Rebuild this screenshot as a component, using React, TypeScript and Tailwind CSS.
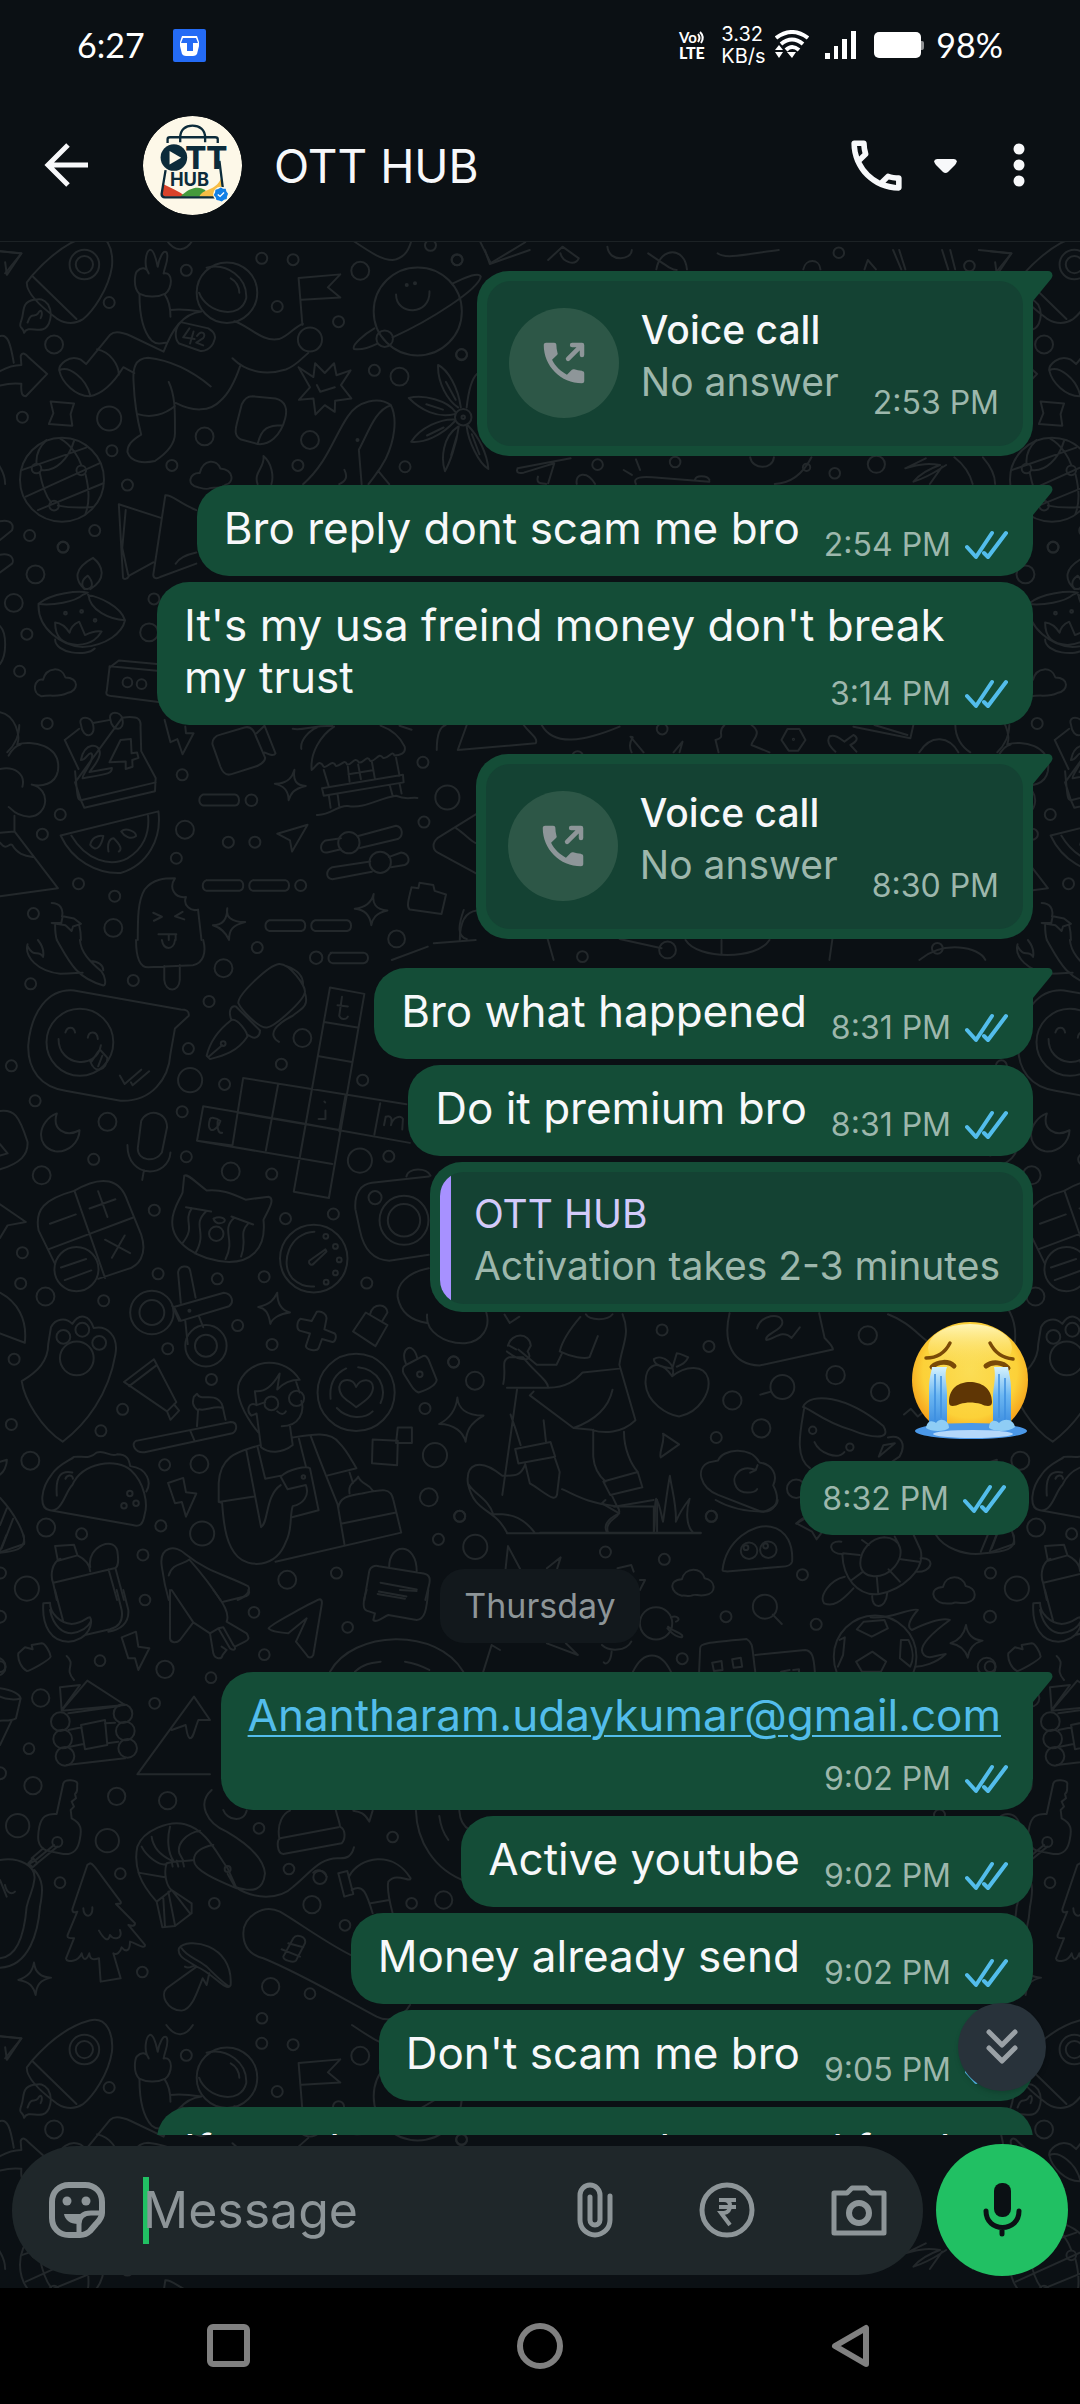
import { MdOutlineCall } from "react-icons/md"

type Dot = [number, number, number]

interface DoodlePanel {
    transform: string
    ratio: number
    dots: Dot[]
    path: string
}

interface Message {
    id: number
    kind: "text" | "call" | "quote" | "emoji" | "day" | "link"
    text: string
    time?: string
    tail?: boolean
    wide?: boolean
}

// chat messages
const messages: Message[] = [
    { id: 1, kind: "call", text: "No answer", time: "2:53 PM", tail: true },
    { id: 2, kind: "text", text: "Bro reply dont scam me bro", time: "2:54 PM", tail: true },
    { id: 3, kind: "text", text: "It's my usa freind money don't break my trust", time: "3:14 PM", wide: true },
    { id: 4, kind: "call", text: "No answer", time: "8:30 PM", tail: true },
    { id: 5, kind: "text", text: "Bro what happened", time: "8:31 PM", tail: true },
    { id: 6, kind: "text", text: "Do it premium bro", time: "8:31 PM" },
    { id: 7, kind: "quote", text: "Activation takes 2-3 minutes" },
    { id: 8, kind: "emoji", text: "Loudly crying face", time: "8:32 PM" },
    { id: 9, kind: "day", text: "Thursday" },
    { id: 10, kind: "link", text: "Anantharam.udaykumar@gmail.com", time: "9:02 PM", tail: true },
    { id: 11, kind: "text", text: "Active youtube", time: "9:02 PM" },
    { id: 12, kind: "text", text: "Money already send", time: "9:02 PM" },
    { id: 13, kind: "text", text: "Don't scam me bro", time: "9:05 PM" },
    { id: 14, kind: "text", text: "If you dont answer me bro send fund otherwise", time: "9:06 PM", wide: true },
]

// wallpaper doodles, one repeating tile split in panels
const panels: DoodlePanel[] = [
    {
        transform: "translate(0 240) scale(0.3444 0.4464)",
        ratio: 0.77,
        dots: [
            [317, 140, 16], [541, 68, 16], [760, 41, 16], [851, 44, 16], [805, 149, 16], [983, 183, 16],
            [1327, 44, 16], [1340, 257, 16], [1087, 292, 16], [1250, 12, 16], [65, 397, 16], [325, 472, 16],
            [370, 549, 16], [499, 505, 16], [865, 505, 16], [1176, 508, 16], [86, 662, 16], [275, 651, 16],
            [183, 688, 16], [78, 883, 16], [447, 804, 16], [57, 966, 16], [137, 1083, 16], [175, 1287, 16],
            [123, 1331, 16], [228, 1442, 16], [333, 1470, 16], [512, 1385, 16], [529, 1198, 16], [730, 1255, 17],
            [663, 1349, 16], [740, 1349, 16], [1228, 1170, 16], [1231, 1304, 16], [97, 1509, 16], [873, 1446, 16],
            [157, 234, 26], [1046, 69, 26], [1160, 306, 26], [594, 440, 26], [900, 448, 26], [103, 749, 26],
            [40, 813, 26], [537, 1321, 26], [433, 879, 26], [329, 1541, 26], [317, 400, 35], [1299, 1249, 35],
            [245, 55, 43], [245, 55, 25], [180, 537, 122], [106, 512, 14], [236, 516, 14], [157, 595, 14],
            [1213, 160, 128], [1117, 221, 24], [1345, 397, 24], [1345, 397, 5], [370, 991, 14], [411, 995, 14],
            [1013, 1350, 31], [1104, 1394, 31], [900, 223, 35], [659, 118, 88], [190, 836, 4], [237, 832, 4], [276, 852, 4],
            [1181, 101, 3], [1205, 97, 3], [1038, 448, 3],
        ],
        path: "M93 80C150 30 210 0 260 -10C310 -20 330 20 325 60C315 110 270 160 240 178C215 190 190 188 165 176C120 150 75 120 78 95ZM93 80L222 177" +
            "M98 134C60 140 72 160 62 180C52 200 68 194 70 208C80 192 105 205 125 200C145 195 155 165 140 145C125 130 115 132 98 134M80 185C90 160 100 175 110 165C120 150 125 165 118 175" +
            "M0 25L62 30L20 78L15 50M0 215C22 210 30 230 40 275M0 294C20 285 40 280 62 280L60 260C65 250 75 255 82 262L137 300L75 350C65 350 60 345 62 322C40 320 20 322 0 326" +
            "M147 362L215 366L205 390L210 416L142 412L155 388ZM405 122C405 160 410 200 440 225C455 235 470 232 482 230M404 120C385 105 392 75 398 70C410 60 425 60 432 75C415 55 425 25 435 22C448 20 455 50 458 60C462 40 475 20 484 28C492 40 478 60 475 75C505 70 500 110 480 120C455 130 425 128 404 120M478 122C495 140 495 160 495 172M495 157C520 153 550 156 585 160C530 165 500 200 475 250L380 215C350 205 330 205 320 212L250 278L235 268C200 255 170 280 172 292C180 320 220 350 260 350C300 345 330 320 358 285L390 298" +
            "M282 245C320 250 345 280 345 302M172 292C200 280 250 310 262 348M675 265C720 300 780 302 830 290C860 282 880 262 895 253M680 182C720 190 760 230 810 222C840 215 860 190 880 188M612 328C560 295 500 270 430 264C390 265 385 290 388 320C390 360 398 400 410 436C380 450 370 460 370 475C380 500 420 500 450 495C480 480 510 460 508 430C508 390 510 350 490 318M400 390C440 400 480 390 508 372M510 365C560 385 610 385 640 360C670 340 685 310 697 283" +
            "M578 118C600 165 700 180 715 130C718 85 660 50 600 62M670 86C685 92 695 105 695 118M525 184L605 198C620 205 628 215 622 225C615 245 590 250 580 248L520 232C505 220 508 195 525 184M550 198L532 218L565 222M562 205L552 232M572 215C585 200 600 210 590 220L570 230L590 236" +
            "M878 190L867 85L988 77L952 106L988 129L876 134M1150 122C1150 170 1250 170 1247 115M1315 97C1350 85 1390 70 1396 82C1390 110 1250 180 1140 218M1087 198C1060 210 1020 235 1028 244C1050 248 1080 238 1096 232" +
            "M867 285L910 307L915 276L943 298L970 276L977 303L1018 292L990 325L1020 355L973 360L972 385L943 370L916 391L910 355L868 358L900 330ZM920 325L930 340L972 330M732 350L800 355C830 360 835 380 828 400C815 440 780 460 748 457L700 447C680 440 683 425 688 410L702 368C710 355 720 350 732 350M748 457C760 420 780 415 820 415" +
            "M880 547C950 500 970 440 1010 395C1040 360 1100 350 1135 370C1155 400 1145 450 1120 490C1100 520 1085 530 1070 547M1135 370C1090 380 1070 430 1042 470L1050 547M1098 517L1130 547M1000 515C1010 530 1005 540 985 547" +
            "M1330 375C1300 360 1270 320 1272 280C1300 290 1330 330 1338 375M1320 390C1270 400 1220 380 1187 354C1230 345 1300 360 1322 385M1322 405C1280 440 1230 455 1194 452C1220 420 1280 400 1320 402M1332 418C1325 460 1305 500 1292 518C1280 490 1285 440 1330 418M1358 415C1390 440 1415 480 1418 513C1390 500 1360 450 1355 418M1355 375C1360 340 1370 310 1385 300M1295 318L1323 358M1238 368L1286 380M1240 438L1288 420M1310 482L1326 440M1370 435L1392 480" +
            "M65 515L250 465M75 575L290 500M110 605L300 545M115 520C125 560 140 580 148 588M168 595C200 600 240 600 270 598M135 448C105 470 105 490 106 500M175 445C210 460 230 490 236 504M248 524C260 560 260 590 248 614M120 515C160 520 200 490 215 450" +
            "M575 554C540 550 550 520 580 522C590 490 630 490 640 512C680 515 680 545 655 548C640 560 620 552 610 556C600 560 585 556 575 554M748 547C735 520 770 510 765 484C790 500 795 530 788 547" +
            "M345 592L465 622M345 592L357 755C358 762 370 760 375 752L445 722M365 605L355 690L372 750M480 572L445 750C445 758 455 760 465 755L570 725M480 572C500 570 520 590 570 605M510 725C520 712 540 705 570 700" +
            "M112 815C108 870 180 910 240 912C310 908 355 880 363 852C350 820 290 800 255 795M112 815C150 820 220 810 240 795L255 790C230 785 150 790 112 815M257 795C260 830 320 850 363 852M245 782C215 760 215 735 270 712C300 730 310 760 262 782M255 752C230 765 238 782 254 782C272 780 270 765 255 752M160 857C160 890 180 905 225 907C270 905 285 890 295 877C280 875 260 880 247 885L230 855C215 860 205 870 202 880C190 865 175 858 160 857M160 895C160 925 250 935 275 915" +
            "M120 1022C90 1015 100 980 125 985C135 955 180 955 190 980C230 980 230 1010 195 1015C170 1025 150 1018 120 1022M318 958L310 1010C305 1020 315 1022 330 1022L460 1035M318 958L345 942L456 950M318 955L456 965" +
            "M188 1120L230 1095M270 1082L320 1075M355 1070C405 1065 410 1075 408 1090L410 1145L452 1205L450 1235L245 1272L235 1255L218 1215ZM188 1120L228 1185M218 1190C225 1250 225 1255 235 1255L452 1215M235 1165C245 1125 290 1125 290 1150C290 1165 270 1180 260 1192L325 1183C325 1195 320 1195 240 1206C235 1200 280 1160 265 1150C255 1148 250 1165 235 1165M350 1120L318 1170L365 1168L365 1185L385 1180L384 1165L402 1160L398 1148L382 1150L380 1118Z" +
            "M235 1085C225 1065 265 1065 270 1085C280 1115 240 1120 235 1085M320 1072C315 1055 350 1055 355 1072C365 1100 325 1105 320 1072M478 1075L495 1125L515 1118L530 1152L562 1105L540 1105L538 1090M617 1130C615 1120 625 1110 640 1108L710 1092C730 1088 738 1100 742 1110L770 1160C770 1170 750 1178 740 1180L670 1197C655 1200 645 1190 640 1180ZM745 1105L768 1088L800 1150C795 1158 780 1152 768 1148M855 1187C850 1210 860 1222 888 1223C850 1230 845 1240 838 1255C838 1230 820 1222 798 1218C840 1218 850 1200 855 1187" +
            "M590 1242H682C698 1245 698 1265 682 1267H590C575 1262 575 1248 590 1242M600 1434H695C710 1437 710 1455 695 1458H600C585 1455 585 1438 600 1434M735 1434H828C843 1437 843 1455 828 1458H735C720 1455 720 1438 735 1434M782 1524H875C890 1527 890 1545 875 1548H782C767 1545 767 1528 782 1524M915 1524H1008C1023 1527 1023 1545 1008 1548H915C900 1545 900 1528 915 1524" +
            "M805 1330L893 1310L848 1370L842 1345ZM990 1340L945 1345C925 1355 930 1375 950 1372L990 1365M1040 1335L1150 1312C1170 1315 1172 1335 1155 1342L1045 1362M1075 1392L965 1405C945 1412 945 1430 965 1432L1080 1415M1130 1382L1165 1372C1190 1375 1192 1395 1175 1400L1135 1405" +
            "M905 1187C900 1150 930 1110 970 1090M905 1187C920 1180 925 1160 940 1180C950 1185 965 1160 975 1178C990 1180 1000 1160 1008 1175C1020 1178 1030 1155 1042 1170C1055 1175 1065 1150 1075 1167C1090 1170 1100 1145 1112 1160C1125 1165 1140 1140 1145 1155C1160 1155 1180 1150 1175 1135C1160 1110 1130 1095 1105 1088M940 1187L955 1225M1150 1160L1160 1200M935 1228L1170 1198L1172 1215L940 1245ZM955 1245L960 1272M980 1240L985 1268M1132 1222L1140 1245M1160 1217L1166 1240M920 1288C960 1290 980 1265 1010 1268C1060 1275 1100 1250 1150 1245C1180 1255 1190 1248 1212 1250M1010 1180L1015 1213M1040 1175L1048 1208M1080 1170L1088 1205M1012 1197L1082 1188M850 1095C880 1100 900 1088 965 1088M875 1140C870 1120 900 1098 920 1092M1195 1097L1160 1088" +
            "M176 1334L460 1280C470 1340 430 1400 350 1418C280 1420 210 1390 176 1334M207 1334C250 1390 320 1405 370 1385C415 1365 435 1330 430 1290M262 1355C265 1340 285 1332 300 1335C295 1355 280 1375 262 1355M315 1370C310 1350 320 1340 330 1340C350 1355 355 1365 345 1370M352 1325C365 1315 395 1325 395 1335C380 1345 360 1335 352 1325" +
            "M0 1058C45 1065 60 1110 50 1130C90 1120 180 1130 168 1190C160 1220 120 1225 92 1220C150 1230 140 1290 85 1292C40 1290 30 1270 25 1270M25 1155C35 1140 50 1132 60 1130M0 1185C40 1178 75 1195 65 1225M42 1290V1325L168 1452L0 1470M0 1328L42 1325M0 1350C20 1370 25 1350 35 1355C50 1375 70 1380 95 1382" +
            "M400 1568C400 1520 400 1480 420 1455C445 1430 480 1430 508 1430C490 1450 505 1475 540 1472C530 1490 555 1505 575 1500L585 1568M445 1507L470 1516L447 1525M530 1505L508 1515L535 1522M460 1555H512M490 1556V1568M510 1556V1568M660 1497C655 1515 670 1528 712 1528C675 1535 665 1545 665 1568M660 1497C660 1520 650 1535 618 1535C640 1540 655 1550 665 1568M1085 1465C1080 1485 1090 1500 1125 1502C1090 1508 1082 1520 1078 1535C1075 1515 1060 1500 1030 1498C1065 1495 1080 1480 1085 1465M1195 1450L1215 1452L1218 1440L1258 1445L1262 1458L1295 1466L1282 1510L1190 1500C1180 1495 1185 1480 1195 1450M1385 1285L1270 1340C1255 1350 1255 1365 1270 1372L1385 1420M1325 1318C1350 1330 1370 1350 1385 1352" +
            "M150 1485C175 1485 185 1500 180 1515M150 1530L178 1530L182 1515L215 1520L235 1532L212 1538L208 1548L190 1535ZM160 1535C160 1555 162 1560 165 1568M230 1535C235 1550 235 1560 235 1568M1335 1568C1335 1530 1350 1505 1385 1502M483 0C510 30 540 25 560 0M1022 0C1080 30 1110 45 1140 45C1180 40 1190 15 1195 0M1395 5L1425 52L1525 5M0 630C35 625 40 640 35 650L0 672M0 705C40 700 40 720 35 725L0 745M0 865C20 880 20 930 0 950",
    },
    {
        transform: "translate(0 940) scale(0.3444 0.4209)",
        ratio: 0.82,
        dots: [
            [89, 104, 16], [387, 96, 16], [747, 18, 16], [607, 146, 16], [918, 42, 18], [547, 258, 16], [33, 299, 16],
            [652, 343, 16], [817, 295, 16], [1053, 333, 16], [102, 382, 16], [529, 408, 16], [272, 521, 16], [541, 515, 16],
            [1129, 514, 16], [789, 556, 16], [448, 642, 16], [829, 662, 16], [968, 651, 16], [65, 743, 16], [60, 816, 16],
            [459, 793, 16], [631, 805, 16], [767, 800, 16], [1065, 815, 16], [301, 857, 16], [690, 916, 16], [41, 996, 16],
            [487, 971, 16], [790, 961, 16], [614, 1044, 16], [356, 1115, 16], [1234, 1113, 16], [1317, 1002, 16],
            [33, 1151, 16], [293, 1166, 16], [478, 1247, 16], [467, 1392, 16], [237, 1411, 16], [1335, 1369, 16],
            [415, 1461, 16], [977, 1504, 16], [1273, 1424, 16], [649, 67, 26], [878, 233, 26], [312, 432, 26],
            [121, 559, 26], [670, 550, 26], [132, 847, 26], [1379, 1047, 26], [88, 1237, 26], [134, 1396, 26],
            [579, 1245, 26], [1245, 1324, 26], [834, 1520, 26], [552, 333, 35], [1045, 524, 35], [587, 1410, 35],
            [1263, 1224, 35], [1380, 1442, 35], [78, 1541, 35], [232, 243, 97], [441, 885, 63], [441, 885, 36],
            [598, 964, 60], [598, 964, 32], [911, 757, 98], [1034, 1075, 112], [1173, 666, 71], [1173, 666, 47],
            [1089, 612, 19], [222, 782, 64], [223, 994, 49], [184, 943, 20], [239, 926, 20], [288, 957, 20],
            [628, 698, 21], [946, 704, 7], [974, 728, 7], [985, 760, 7], [974, 791, 7], [947, 813, 7], [1219, 1032, 8],
            [360, 1344, 8], [377, 1315, 8], [395, 1338, 8], [550, 881, 3], [648, 246, 7], [881, 1276, 5], [788, 1101, 20], [861, 1089, 22],
        ],
        path: "M80 10C70 40 110 75 175 80C210 80 225 78 240 78M80 15C100 45 110 20 125 40C130 20 115 5 110 0M165 0C200 50 220 90 300 108C310 108 305 85 295 75C260 50 235 30 232 0M262 50C285 50 300 60 300 72M395 0C395 50 410 65 430 65L560 60C590 55 600 30 590 0M470 0C475 25 505 25 508 0M477 62V95C480 125 520 125 522 95V60M960 30H1055C1073 33 1073 52 1055 55H965C950 52 950 35 965 30" +
            "M215 120C140 115 90 170 82 250C80 310 120 350 190 358L350 382C440 385 490 330 495 270L508 210L548 180C550 168 540 165 525 165ZM190 220C195 205 215 205 218 220M255 232C258 215 282 215 284 235M170 235C170 300 280 310 293 250M265 290L285 265M285 300L297 275M262 288C275 320 310 310 312 280L292 262M348 322L362 342L410 308M380 338L385 345L433 312" +
            "M600 275C610 240 640 210 672 190C690 185 720 220 718 230C690 265 650 275 610 283ZM672 190C662 170 670 155 685 158L755 215C755 230 740 235 730 230L718 225M692 150C690 130 780 60 810 57C840 55 890 110 885 125C880 145 800 205 775 208C750 210 700 165 692 150M832 62C860 70 880 85 880 105M885 125C900 160 870 165 850 180C800 200 775 225 810 242M605 278L645 250" +
            "M958 113L1058 128L955 613L853 598ZM941 195L1038 208M926 276L1022 290M706 328L1180 390M690 410L990 452L985 455M590 395L890 437L985 452L1190 482M572 477L965 532M590 395L572 477L675 488L706 328M807 345L772 500M1104 388L1087 462M1003 370L985 452M905 357L870 518M610 425C600 450 615 462 635 440L640 430C625 420 612 422 610 425M632 430C630 450 635 460 645 458M945 405V425H925M942 384L944 386M980 155L1010 158M993 135L985 180C990 190 1005 190 1010 182M1115 440L1120 420C1135 415 1140 425 1135 440M1135 440C1140 420 1165 415 1170 425L1168 450" +
            "M165 412C110 430 100 490 160 502C200 505 230 480 231 452C190 470 150 450 165 412M410 430C425 400 485 405 485 445L470 505C450 530 400 525 400 495ZM370 487C370 570 490 565 495 505M418 547L413 570M0 406C40 402 55 415 80 480C82 510 60 530 0 545M0 485L22 507L0 512M0 628L75 670L22 678L0 708M0 838C50 860 80 900 72 957L0 935" +
            "M215 596C300 555 350 570 370 620L410 700C430 750 400 775 370 782L285 805M160 770L112 690C100 640 130 615 215 596M217 598L305 803M140 735L385 660M145 674L220 652M260 638L335 616M285 597L312 658M305 712L378 744M362 702L325 755M177 778L250 758M188 808L265 785" +
            "M535 560C545 555 560 570 600 595C640 592 670 600 713 617L780 610C800 615 780 640 765 665C775 740 720 765 665 765C570 760 500 720 500 670C500 640 520 620 530 600ZM540 635L613 645M672 657L735 676M557 637C530 670 570 680 530 720M598 645C555 680 605 690 567 745M680 660C640 690 685 710 655 758M722 672C690 700 720 710 700 752M620 662C640 655 660 662 650 670C640 675 625 675 620 662" +
            "M913 693C840 695 810 770 850 805C870 820 890 825 912 823M945 735L898 762C895 770 905 775 912 768L948 740ZM1245 748L1130 762C1080 760 1055 730 1045 690L1032 640C1028 600 1050 580 1080 577L1245 562M1180 562C1185 540 1240 540 1250 560M525 862L517 790C520 772 548 772 552 785L568 850M505 872L650 838C675 840 680 862 665 870L525 905ZM500 868L520 905M538 905L545 960M578 895L590 920" +
            "M805 838C805 865 820 880 842 885C810 888 790 900 785 912C780 885 770 875 750 872C785 865 795 855 805 838M920 883C935 880 950 890 948 900L942 925L972 935C978 940 975 955 965 955L935 948L925 970C920 978 890 975 888 965L900 935L870 928C860 925 862 905 872 900L905 905ZM1062 885L1125 915L1090 965L1025 930ZM1075 888C1085 860 1125 865 1125 885L1110 905M1245 780C1180 790 1150 820 1155 850C1165 890 1200 905 1240 910M1240 890C1235 930 1290 960 1350 958C1400 955 1425 920 1412 885M1465 890L1480 910L1508 895" +
            "M148 920C160 900 190 895 210 912C230 885 260 890 272 922C310 915 345 940 335 985C315 1080 250 1150 182 1192C120 1160 70 1090 63 1048C110 1025 140 1000 140 960ZM447 996L360 1050L485 1120L512 1098ZM455 1010L375 1060M485 1120L495 1140L520 1118L505 1103M563 1085C560 1095 555 1105 575 1118L572 1155M563 1085L572 1078C580 1095 610 1080 630 1090C650 1100 645 1110 655 1140M395 1190L670 1145C690 1145 690 1165 675 1172L420 1217C390 1220 380 1195 395 1190M552 1165L565 1190M578 1115C600 1120 620 1105 648 1112" +
            "M750 1170C710 1130 680 1080 695 1050C730 990 830 990 870 1045C840 1045 820 1055 805 1068L812 1030C790 1060 770 1075 740 1072L745 1105L770 1098M745 1105C720 1095 715 1120 730 1130L745 1125L758 1205C780 1220 820 1220 850 1200L842 1155M818 1155C870 1155 885 1120 875 1095M805 1120C815 1128 825 1128 830 1120M860 1050L870 1075M755 1200C700 1215 640 1220 635 1290V1335L645 1338C650 1400 660 1440 690 1465C720 1490 800 1495 830 1430C850 1400 840 1370 850 1345C880 1340 900 1320 888 1295L835 1305L815 1275C840 1255 890 1250 900 1255L925 1355L845 1372M635 1335L738 1322M715 1212L758 1395C780 1385 770 1320 815 1295M748 1205L770 1280L820 1272M868 1185L888 1250M850 1182C900 1175 960 1165 985 1195C1005 1210 1020 1235 1035 1255L952 1272M902 1178C930 1240 960 1300 980 1340L1000 1435M800 1477L1165 1408L1142 1330C1135 1300 1110 1305 1050 1315C1010 1320 985 1325 982 1350M990 1387L1150 1360M1015 1315C1010 1290 1030 1290 1040 1275C1050 1295 1070 1290 1082 1308M1015 1265L1025 1290" +
            "M1034 1110C1005 1090 985 1085 985 1062C990 1040 1025 1040 1034 1062C1045 1040 1085 1040 1083 1065C1080 1085 1060 1095 1034 1110M960 1090C955 1050 975 1030 1005 1018M1040 1015C1100 1020 1125 1065 1105 1100M978 1112C1010 1140 1060 1138 1082 1120M1172 1030C1165 1015 1175 1010 1190 1005L1225 990C1235 985 1240 990 1245 998L1268 1045C1265 1060 1235 1070 1215 1075C1200 1070 1195 1060 1172 1030M1178 1005C1160 970 1200 950 1212 995M1328 1087C1330 1110 1350 1130 1404 1130C1360 1150 1355 1170 1352 1192C1345 1170 1320 1150 1275 1150C1310 1135 1325 1110 1328 1087M1082 1187L1155 1190L1153 1248L1080 1243ZM1155 1158H1196V1195H1150Z" +
            "M145 1355C180 1360 190 1310 210 1295C240 1240 340 1230 380 1260C420 1290 430 1340 420 1365C415 1390 405 1395 385 1390L145 1355C110 1350 120 1300 150 1270C170 1245 200 1238 215 1228C235 1225 260 1235 280 1218C305 1210 320 1230 340 1222C370 1222 375 1235 378 1250C430 1255 440 1290 425 1310M165 1320C160 1270 180 1260 210 1265M190 1280C195 1270 210 1270 212 1280M488 1290L532 1278L540 1312L570 1315L540 1370L528 1335L508 1338ZM0 1325C40 1360 75 1410 70 1435L0 1455M20 1350L0 1390M38 1375L5 1445M0 1240L20 1235C20 1250 10 1265 0 1270" +
            "M160 1440L215 1437L225 1462L168 1475ZM175 1470C150 1480 145 1510 155 1530L165 1568M225 1462C245 1470 260 1480 262 1500M155 1527L335 1492L360 1568M262 1490C250 1440 340 1410 342 1460C345 1480 340 1490 335 1492M315 1495L340 1568M470 1490C460 1440 510 1435 540 1460C600 1500 660 1510 720 1535C730 1545 715 1560 690 1568M470 1490C475 1520 480 1540 490 1568M490 1510C500 1480 530 1485 550 1472M550 1472C580 1500 610 1530 640 1568M1058 1568L1072 1500C1075 1488 1090 1485 1100 1488L1230 1505C1250 1508 1250 1520 1245 1535L1235 1568M1130 1490C1130 1430 1210 1430 1210 1500M1105 1527L1210 1543M1100 1548L1180 1560M1468 1494L1475 1440L1510 1494",
    },
    {
        transform: "translate(0 1590) scale(0.3333)",
        ratio: 1,
        dots: [
            [435, 30, 16], [762, 67, 16], [1043, 112, 16], [793, 194, 16], [300, 212, 16], [633, 263, 16], [464, 340, 16],
            [87, 476, 16], [777, 715, 16], [867, 837, 16], [1178, 741, 16], [361, 851, 16], [180, 878, 16], [643, 940, 16],
            [1235, 940, 16], [1035, 1006, 16], [427, 1146, 16], [930, 1211, 16], [786, 1285, 16], [495, 238, 26],
            [122, 324, 26], [99, 587, 26], [350, 619, 26], [503, 632, 26], [936, 944, 26], [1331, 930, 26], [812, 1190, 26],
            [53, 707, 35], [322, 752, 35], [181, 395, 28], [188, 447, 28], [195, 499, 28], [369, 371, 28], [376, 423, 28],
            [383, 475, 28], [172, 756, 15], [683, 837, 9], [960, 862, 20], [0, 80, 18], [0, 550, 18], [0, 230, 16],
        ],
        path: "M130 40L150 38C150 70 180 100 215 102C250 100 260 80 270 82C280 95 270 150 205 155C155 155 125 110 130 40M150 60C160 110 190 130 215 130C245 125 265 110 272 95M165 0L190 95M255 135L330 118C360 110 370 90 365 60L350 0M370 0L385 60C388 100 360 120 325 125" +
            "M510 0V145C512 160 530 160 540 150L580 97L515 0M580 97L630 130L640 190C645 208 665 210 668 195L680 180L665 170M640 0C670 40 690 70 680 95L740 130C750 145 745 150 735 155L705 170M655 115L690 175C705 185 710 175 700 165L670 112ZM670 35L740 18C750 12 748 5 745 0M630 130L655 115M806 115C808 105 950 30 960 28C968 30 966 40 965 45L940 195C935 205 925 205 920 195L888 155L920 85L865 130C840 128 812 125 806 115M1100 0C1090 30 1085 55 1100 62L1125 70L1120 90C1130 100 1150 80 1165 75L1250 90C1275 88 1280 60 1285 0M1133 12L1215 26M1200 0L1250 3" +
            "M55 190L75 172L98 178L95 165L125 160C135 160 150 185 152 200C150 210 85 245 80 243C65 235 52 210 55 190M365 142L408 125L415 170L448 175L415 240L405 205L385 205ZM200 198C230 225 190 235 222 270M180 292L240 285L185 360ZM185 362L262 272L375 345ZM243 405L315 390L322 465L255 478ZM205 420L245 412M210 470L250 462M315 400L345 398M322 460L355 455M205 370L360 348M200 525L375 505" +
            "M630 553H412L582 320L630 390L595 390C580 430 580 445 570 445C560 440 560 415 557 405L515 420M190 580C195 565 230 570 232 580C230 600 235 605 225 612L228 625L215 635L222 650L212 660L215 685C245 700 245 720 240 745C235 780 220 795 190 792L140 782C110 770 112 740 118 710C125 680 140 670 170 672ZM162 765L105 812L90 820M172 770L105 825M85 820L100 805L112 820L98 832ZM130 775L95 805" +
            "M270 820C280 820 290 840 362 935C365 945 355 940 348 942L405 1000C405 1010 395 1008 385 1005L435 1065C435 1080 410 1060 390 1055C390 1080 380 1090 365 1072C360 1090 350 1095 340 1090L362 1165L302 1175L297 1105C280 1110 270 1110 268 1090C260 1110 250 1115 245 1090C235 1115 200 1120 198 1105L222 1045C210 1045 200 1045 203 1035L232 965C220 970 215 965 218 955L262 825ZM250 955C250 985 280 985 277 952M297 1022C310 1045 325 1060 330 1035C340 1050 370 1050 360 1020" +
            "M412 770C430 720 510 690 555 703C620 720 650 790 683 835L710 895C650 870 580 840 582 810C560 815 530 810 500 820C490 850 500 890 515 900L575 940V970L525 1008L487 1012L470 935C420 880 400 830 412 770M425 770C440 800 480 830 500 822M455 740C460 780 490 800 515 812M510 710C500 750 505 790 520 812M600 722C560 730 530 760 538 790L550 812M640 765C610 770 580 785 582 812M415 848L495 862M515 900L570 970M505 905L525 1005M490 925L495 1010M470 935L515 900M515 815L518 830M530 812L535 830M548 812L552 830" +
            "M635 600C590 640 620 700 680 725C740 760 790 800 795 850C790 900 760 910 705 890M683 852L705 890C760 930 840 930 880 890C930 850 960 800 1020 805C1040 805 1055 800 1062 772M940 848C950 835 970 840 980 860M838 745C830 700 850 670 870 662M840 745L1015 712M1008 662C1015 690 1020 700 1020 710C1040 720 1035 750 1025 760L850 792C830 790 830 750 840 745M670 660C680 690 730 700 740 662M1060 662C1080 665 1095 670 1108 695L1118 662" +
            "M1015 850L1042 843L1060 912L1033 920ZM1048 858C1080 800 1180 780 1232 865C1230 880 1190 845 1165 875C1160 900 1170 940 1178 970M1055 900C1090 880 1100 910 1118 970M1112 940L1168 930M1058 1098C980 1060 900 1000 840 965C790 940 730 980 730 1030C730 1070 750 1095 790 1105C900 1150 1000 1210 1130 1280C1170 1300 1210 1280 1230 1245M850 1100L880 1045C890 1030 920 1040 915 1060L888 1112C880 1120 850 1110 850 1100M845 1078L900 1100M865 1060L910 1072M1248 662C1250 750 1300 840 1400 875M1318 678C1322 710 1330 730 1345 750M1378 662C1380 690 1390 710 1410 720" +
            "M537 1075C560 1040 700 1060 692 1185C680 1210 640 1150 590 1130C560 1110 530 1100 537 1075M555 1130C570 1140 580 1120 590 1130L500 1195C480 1215 500 1260 545 1262C575 1260 590 1210 608 1165L620 1185L628 1150M545 1075C560 1100 590 1105 620 1130C640 1150 670 1180 688 1190M102 1118C105 1145 120 1162 153 1163C120 1170 110 1185 107 1215C100 1190 90 1175 55 1170C85 1160 97 1145 102 1118M0 810C60 800 110 830 103 870C100 900 90 910 80 950C75 1010 60 1100 0 1105M103 840C130 870 130 900 120 950C115 1020 90 1130 0 1133M0 870L20 920M15 885C20 910 35 915 45 905M0 295C40 300 60 315 62 325L48 385C30 395 10 390 0 392M0 320C20 330 50 330 60 325M35 392L0 465M990 245C1060 120 1310 110 1390 245M1065 245C1090 220 1120 218 1142 215M1215 215C1250 220 1270 230 1288 240M1450 245L1475 165L1500 180",
    },
    {
        transform: "translate(360 940) scale(0.4591 0.3827)",
        ratio: 1.2,
        dots: [
            [658, 1019, 12], [760, 1062, 12], [204, 1103, 12], [776, 1300, 12], [765, 1506, 12], [217, 1506, 12],
            [1106, 1033, 20], [1036, 1137, 20], [811, 1203, 20], [1133, 1181, 20], [874, 1276, 20], [950, 1434, 20],
            [920, 1168, 26], [986, 1281, 8], [1067, 1325, 8],
        ],
        path: "M492 978C500 995 540 995 550 978M480 985C455 1020 440 1050 435 1075C460 1090 490 1095 500 1090L518 1035M572 978C590 1030 570 1060 565 1110L600 1255C570 1290 530 1290 505 1280L465 1275L370 1190L378 1180M312 1160C320 1120 305 1100 325 1090L355 1090C380 1130 410 1150 410 1170L320 1170M322 1060C330 1025 370 1025 372 1060L365 1075C380 1100 350 1105 320 1075M345 1070L385 1110L428 1110L440 1080M410 1170C450 1170 470 1150 485 1130L565 1120M325 1060L340 1070M342 1175L310 1450M328 1240C340 1280 345 1300 350 1320M400 1255L405 1310M338 1330L415 1312L425 1350L345 1368ZM360 1370L370 1420C400 1440 430 1480 430 1440L435 1390L425 1355M465 1275C500 1260 540 1230 550 1175M508 1280V1350C510 1380 520 1400 535 1415M575 1285C575 1330 590 1370 605 1390M530 1415L605 1390L615 1430L545 1450ZM548 1450L560 1480H640V1548M560 1480C580 1510 530 1510 540 1548M360 1370C350 1400 340 1400 310 1400C260 1350 230 1370 235 1420C250 1450 280 1460 290 1500C320 1500 350 1500 380 1548M440 1435C470 1450 490 1470 560 1480M320 1550H742M235 1420C250 1500 290 1480 320 1548M640 1548C645 1510 640 1480 645 1460C655 1480 655 1500 660 1520C665 1480 670 1430 675 1400C680 1440 690 1480 688 1520C695 1500 705 1480 718 1460C710 1490 710 1530 725 1548" +
            "M680 1140C650 1090 620 1110 622 1160C625 1210 670 1240 695 1245C740 1235 765 1180 758 1145C750 1110 710 1110 680 1140M680 1140C690 1110 660 1080 640 1095C640 1110 655 1115 680 1120L690 1080C700 1080 710 1090 715 1090C710 1105 700 1110 690 1115M805 975C790 1050 810 1110 870 1112L1030 1070C1030 1060 1020 1050 1012 1040L1000 975M865 1015C870 980 920 970 920 1000C920 1020 880 1030 885 1045C900 1045 920 1015 940 1040L958 1012M872 1188L895 1180" +
            "M965 1220C980 1180 1060 1190 1140 1270C1160 1310 1110 1300 1070 1280C1010 1260 975 1220 965 1220M968 1220C960 1280 945 1350 980 1380M1150 1300C1180 1290 1190 1320 1175 1350L1160 1362M1130 1350L1140 1320L1165 1315ZM990 1312C1000 1340 1040 1360 1055 1338M660 1290L695 1318L655 1352C650 1340 665 1310 660 1290M780 1360C790 1330 850 1320 870 1365C900 1370 910 1400 900 1425C920 1470 900 1500 870 1492L780 1450C740 1430 730 1380 760 1365ZM862 1385C830 1370 805 1400 820 1430C830 1450 860 1445 865 1435M862 1385L850 1392M862 1385L866 1372M1150 978C1200 1000 1220 1040 1250 1060M1185 1240L1200 1225L1215 1245L1232 1228M950 1525C960 1515 970 1500 985 1520",
    },
    {
        transform: "translate(540 1500) scale(0.3444 0.3333)",
        ratio: 1.03,
        dots: [
            [498, 49, 16], [190, 156, 16], [361, 178, 16], [762, 224, 16], [540, 350, 16], [802, 373, 16], [413, 476, 16],
            [1297, 500, 26], [1308, 219, 16], [607, 152, 24], [663, 149, 24], [598, 143, 7], [655, 138, 7], [653, 320, 35],
            [337, 370, 47], [973, 470, 120], [1160, 945, 16],
        ],
        path: "M530 210C540 120 620 70 670 80C720 90 735 140 732 185C730 195 720 200 700 200L560 213C545 215 530 215 530 210M676 344L702 372M412 287C380 280 370 240 412 238C420 200 470 200 478 235C510 240 515 280 480 285C460 290 450 280 440 287C430 290 420 285 412 287M1170 310C1138 303 1128 263 1170 261C1178 223 1228 223 1236 258C1268 263 1273 303 1238 308C1218 313 1208 303 1198 310C1188 313 1178 308 1170 310" +
            "M878 165C880 230 920 290 985 282C1050 270 1120 210 1105 150L1085 105M930 190C930 150 960 115 1000 112C1050 115 1060 160 1030 200C1000 240 930 240 930 190M935 120L955 135M880 160L928 165M905 240L938 215M982 280L978 232M1045 245L1012 208M1100 185L1048 178M1030 110L1040 130M875 125C830 120 840 165 880 162M885 230C840 240 810 290 825 310C850 320 870 310 910 265M965 285C960 330 1005 330 1008 280M1105 175C1150 170 1140 220 1090 215M745 70L770 55M745 70L790 95L803 118L820 95M1150 105C1170 140 1230 170 1290 160C1350 155 1385 150 1375 105M1300 105L1280 155M1325 105L1305 158" +
            "M380 352C400 345 410 360 395 365M370 385C390 410 420 420 412 405C400 395 390 395 372 380M462 515L465 445C465 430 480 428 600 417C620 430 615 440 625 515M500 488L527 483L530 510L505 513ZM558 478L583 473L587 500L562 503ZM625 465L770 450C790 452 795 470 798 515M735 510L752 508V515M700 515L725 510M940 365L1000 360L1010 385L963 410L920 388ZM965 455L1005 485L990 515H935L918 485ZM870 420L885 412L880 465L865 500M1048 420L1070 420C1085 450 1085 480 1075 500L1045 475ZM960 352C1020 360 1080 320 1097 330C1080 350 1060 380 1080 390C1100 380 1160 350 1190 360C1150 390 1090 440 1115 465C1130 480 1150 465 1178 462C1150 490 1110 500 1090 500" +
            "M1237 375C1240 400 1255 420 1285 422C1255 430 1245 450 1242 473C1235 450 1220 435 1192 430C1220 420 1232 400 1237 375M185 487C190 495 205 490 208 455M180 435C200 455 250 455 265 425M20 430L110 465L75 430M270 515C300 450 350 450 380 515M290 240L305 240L290 270M225 205L265 195L272 215M20 205L60 172L50 205M510 0C560 30 620 35 650 35C680 25 690 10 690 0M190 0L180 10L230 40C190 60 185 80 195 98M340 0V98M215 20L330 0M0 98H467",
    },
    {
        transform: "translate(140 560) scale(0.5995 0.3333)",
        ratio: 1.8,
        dots: [[1090, 538, 1], [871, 507, 9], [730, 590, 9], [1330, 1165, 9], [738, 1190, 9], [428, 1137, 14], [880, 1170, 14]],
        path: "M495 570C495 530 500 500 510 495M530 570L545 495M530 570L660 550C665 535 650 520 640 495M670 495C690 560 740 545 800 500M820 577C810 540 830 530 818 530L840 577M890 577L905 545L900 577M965 577L960 540C980 530 960 520 975 495M1020 495C1040 520 1020 540 1020 555L1050 577M1080 507H1100L1110 540L1098 572H1082L1070 540ZM1150 530C1160 520 1170 540 1175 545L1190 525C1200 535 1195 545 1185 555L1195 575M1160 575C1150 560 1145 545 1150 530M1190 500L1285 535L1290 495M1225 495L1280 525M1300 577C1320 520 1350 530 1365 577M1360 495C1360 530 1370 560 1385 577M1450 495C1450 530 1440 560 1430 577M540 1050C530 1100 530 1130 545 1137M490 1150L560 1140M680 1137L690 1200M800 1137L870 1165M910 1140C930 1200 1030 1200 1050 1140M970 1140V1180M1150 1200L1155 1137M1300 1200C1340 1140 1400 1160 1410 1200M420 1200L480 1160",
    },
    {
        transform: "translate(440 250) scale(0.4082 0.3333)",
        ratio: 1.22,
        dots: [[42, 30, 13], [977, 8, 13], [1297, 48, 13], [53, 313, 13], [386, 644, 13], [576, 636, 13], [967, 670, 13], [1069, 643, 21], [898, 652, 9], [1502, 892, 13]],
        path: "M110 0L122 42L220 0M265 30L300 -10L340 25C330 50 300 35 295 10M410 -10C415 40 470 30 470 0M510 10C570 60 570 60 580 60M530 58C540 -10 600 -10 605 58M680 10C700 30 760 10 830 0M890 58C895 25 930 25 932 58M1040 58L1048 30L1068 58M1110 0L1130 58M1125 0L1140 58M1230 0L1245 58M1250 0L1262 58M1320 0L1400 10L1360 70M190 655L320 625M190 655C185 670 195 670 205 668L280 640L265 700M240 680C235 700 245 700 260 702M335 702C330 670 360 660 380 702M450 660L470 675M480 628L490 660M480 702C470 680 500 680 520 682L660 695M625 690C625 675 655 675 660 690M760 622C765 660 815 660 818 622M820 702C860 700 890 670 910 622M1140 655L1190 625M1140 655C1180 640 1200 640 1225 645C1190 660 1170 680 1160 695C1200 680 1220 660 1240 645M1260 622C1290 650 1300 680 1305 702M1330 622C1350 650 1360 680 1360 702M1200 702L1230 650",
    },
]

const tiles = [[-990, 0], [0, 0], [990, 0], [-990, 1785], [0, 1785], [990, 1785]]

// chat wallpaper
const Wallpaper = () => (
    <svg className="absolute inset-0 h-full w-full" aria-hidden="true">
        <defs>
            <g id="tile" fill="none" stroke="#23282b" strokeWidth="2" strokeLinecap="round" strokeLinejoin="round">
                {panels.map((panel) => (
                    <g key={panel.transform} transform={panel.transform}>
                        {panel.dots.map(([x, y, r], index) => (
                            <ellipse key={index} cx={x} cy={y} rx={r} ry={r * panel.ratio} vectorEffect="non-scaling-stroke" />
                        ))}
                        <path d={panel.path} vectorEffect="non-scaling-stroke" />
                    </g>
                ))}
            </g>
        </defs>
        {tiles.map(([x, y]) => <use key={`${x},${y}`} href="#tile" x={x} y={y} />)}
    </svg>
)

// read receipt
const Ticks = () => (
    <svg className="h-8 w-11 shrink-0" viewBox="0 0 44 32" fill="none" stroke="#53bdeb" strokeWidth="4" role="img" aria-label="Read">
        <path d="M2 18L11 28L27 4M19 24L23 28L41 4" strokeLinejoin="round" strokeLinecap="round" />
    </svg>
)

const Time = ({ value, ticks = true }: { value?: string, ticks?: boolean }) => (
    <div className="flex shrink-0 items-center gap-[14px] text-[32px] leading-10 text-[#9db7ac]">
        <time>{value}</time>
        {ticks && <Ticks />}
    </div>
)

const Tail = () => (
    <svg className="absolute top-0 left-full h-[30px] w-5" viewBox="0 0 20 30" aria-hidden="true">
        <path d="M-1 0H15C19 0 21 4 18 8L0 30H-1Z" fill="#144d37" />
    </svg>
)

// outgoing voice call
const CallBody = ({ text, time }: { text: string, time?: string }) => (
    <div className="flex items-end rounded-3xl bg-[#144233] pr-6 pl-[22px]">
        <span className="mb-7 flex size-[110px] items-center justify-center rounded-full bg-[#2d5747]">
            <svg className="size-[54px]" viewBox="0 0 24 24" fill="#8e9699" aria-hidden="true">
                <path d="M20 15.4c-1.2 0-2.4-.2-3.5-.6-.4-.1-.7 0-1 .2l-2.2 2.2c-2.8-1.4-5.100-3.700-6.600-6.600l2.200-2.200c.3-.3.4-.7.2-1-.3-1.100-.5-2.300-.5-3.500 0-.5-.4-.9-1-.9H4c-.5 0-1 .4-1 1 0 9.400 7.600 17 17 17 .5 0 1-.4 1-1v-3.500c0-.6-.5-1-1-1z" />
                <path d="M13.800 10.200L19.700 4.300M15.600 4H20V8.400" fill="none" stroke="#8e9699" strokeWidth="2" strokeLinecap="round" strokeLinejoin="round" />
            </svg>
        </span>
        <div className="mt-[23px] mb-[38px] ml-[22px] text-[39px] leading-[52px]">
            <p className="font-medium text-[#f7f8fa]">Voice call</p>
            <p className="text-[#9db7ac]">{text}</p>
        </div>
        <div className="mb-[23px] ml-[34px]">
            <Time value={time} ticks={false} />
        </div>
    </div>
)

const CryingFace = ({ label }: { label: string }) => (
    <svg className="h-[118px] w-[118px]" viewBox="0 0 118 118" role="img" aria-label={label}>
        <defs>
            <radialGradient id="face" cx="50%" cy="42%" r="58%">
                <stop offset="0" stopColor="#fbdd55" />
                <stop offset="0.7" stopColor="#fcd138" />
                <stop offset="1" stopColor="#f49a16" />
            </radialGradient>
            <linearGradient id="shine" x1="0" y1="0" x2="0" y2="1">
                <stop offset="0" stopColor="#fff6b8" />
                <stop offset="1" stopColor="#fbdd55" stopOpacity="0" />
            </linearGradient>
            <linearGradient id="tear" x1="0" y1="0" x2="0" y2="1">
                <stop offset="0" stopColor="#d5f2fd" />
                <stop offset="0.5" stopColor="#6cb7f2" />
                <stop offset="1" stopColor="#3d8ee0" />
            </linearGradient>
        </defs>
        <circle cx="59" cy="58" r="58" fill="url(#face)" />
        <ellipse cx="59" cy="26" rx="42" ry="24" fill="url(#shine)" />
        <path d="M15 36C26 36 34 31 39 21M79 21C84 31 92 36 102 37" fill="none" stroke="#7a4a07" strokeWidth="3.500" strokeLinecap="round" />
        <path d="M21 45C27 39 38 39 43 44M75 44C81 39 92 40 97 46" fill="none" stroke="#7a4a07" strokeWidth="5" strokeLinecap="round" />
        <path d="M38 80C38 66 48 60 59 60S81 66 81 80C81 86 74 84 70 82C62 80 56 80 49 82C44 84 38 86 38 80Z" fill="#5f3605" />
        <path d="M21 45H36C33 52 36 62 36 72V102H18V66C18 56 20 52 21 45ZM83 45H97C98 52 100 58 100 66V102H82V72C83 62 85 54 83 45Z" fill="url(#tear)" />
        <path d="M24 52V98M30 54V96M88 52V96M94 56V98" stroke="#3d8ee0" strokeWidth="1.500" />
        <ellipse cx="60" cy="109" rx="56" ry="8" fill="#4b98e8" />
        <ellipse cx="62" cy="112" rx="40" ry="4" fill="#b5d8fa" />
        <path d="M15 106C16 98 22 98 25 101C29 95 38 98 38 106C34 110 20 110 15 106ZM78 106C78 98 84 97 88 101C94 95 103 98 104 105C98 110 84 110 78 106Z" fill="#8fcdf5" />
    </svg>
)

const Bubble = ({ message }: { message: Message }) => {
    const { kind, text, time, tail, wide } = message

    // day separator
    if (kind === "day") {
        return (
            <li className="mt-[34px] self-center rounded-3xl bg-[#12181c] px-6 py-[17px] text-[34px] leading-10 text-[#8d9598]">
                {text}
            </li>
        )
    }

    // big emoji with its own time pill
    if (kind === "emoji") {
        return (
            <li className="mt-[10px] flex flex-col items-end pr-1">
                <CryingFace label={text} />
                <div className="mt-[21px] rounded-[32px] bg-[#144d37] px-[22px] pt-[18px] pb-4">
                    <Time value={time} />
                </div>
            </li>
        )
    }

    const shape = tail ? "mt-[29px] rounded-tr-none" : "mt-[6px]"

    return (
        <li className={`relative rounded-[32px] bg-[#144d37] text-[#f7f8fa] ${shape} ${wide ? "w-[876px] max-w-full" : ""}`}>
            {tail && <Tail />}
            {kind === "call" && (
                <div className="p-[10px]">
                    <CallBody text={text} time={time} />
                </div>
            )}
            {kind === "quote" && (
                <div className="px-[10px] pt-[10px] pb-2">
                    <blockquote className="overflow-hidden rounded-3xl bg-[#144233]">
                        <div className="border-l-[11px] border-[#a791ff] pt-4 pr-[23px] pb-3 pl-[23px] text-[39px] leading-[52px]">
                            <p className="text-[#d3cafa]">OTT HUB</p>
                            <p className="text-[#9db7ac]">{text}</p>
                        </div>
                    </blockquote>
                </div>
            )}
            {kind === "link" && (
                <div className="flex flex-col items-end gap-[18px] pt-[17px] pb-[11px] pl-[27px]">
                    <a className="mr-8 text-[44px] leading-[52px] text-[#53bdeb] underline decoration-2 underline-offset-4" href="mailto:Anantharam.udaykumar@gmail.com">{text}</a>
                    <div className="mr-6">
                        <Time value={time} />
                    </div>
                </div>
            )}
            {kind === "text" && (
                <div className={`pt-[17px] pr-6 pb-[11px] pl-[27px] ${wide ? "grid" : "flex items-end gap-6"}`}>
                    <p className="col-start-1 row-start-1 mb-[11px] text-[44px] leading-[52px]">{text}</p>
                    <div className="col-start-1 row-start-1 self-end justify-self-end">
                        <Time value={time} />
                    </div>
                </div>
            )}
        </li>
    )
}

// system status bar
const StatusBar = () => (
    <div className="flex h-[90px] items-center pr-[77px] pl-[77px] font-[Lato,sans-serif] text-[34px] leading-10 text-white">
        <span>6:27</span>
        <svg className="ml-7 size-[33px]" viewBox="0 0 33 33" aria-hidden="true">
            <rect width="33" height="33" rx="2" fill="#246bf5" />
            <path d="M9 7H24L26 13V17L24 25C23 26 22 27 20 27H13C11 27 10 26 9 25L7 17V13Z" fill="#fff" />
            <path d="M10 9H23L25 14H20V22H14V14H8Z" fill="#246bf5" />
        </svg>
        <div className="ml-auto flex items-center">
            <svg className="h-[30px] w-[27px] overflow-visible" viewBox="0 0 27 30" fill="#fff" role="img" aria-label="VoLTE">
                <text x="0" y="13" fontSize="15" fontWeight="700" fontFamily="Lato">Vo</text>
                <text x="0" y="29" fontSize="16" fontWeight="900" fontFamily="Lato">LTE</text>
                <path d="M19 4Q22 8 19 12M21 2Q26 7 22 13" fill="none" stroke="#fff" strokeWidth="2" />
            </svg>
            <span className="ml-[15px] flex w-[45px] flex-col font-[Inter,sans-serif] text-[20px] leading-[22px]">
                <span>3.32</span>
                <span>KB/s</span>
            </span>
            <svg className="ml-[9px] h-[30px] w-[34px]" viewBox="0 0 34 30" fill="none" stroke="#fff" strokeWidth="4" aria-hidden="true">
                <path d="M1 8Q17 -4 33 8M6 14Q17 5 28 14M11 20Q17 14 24 20" />
                <path d="M0 20L4 15L8 20ZM0 22H8L4 28ZM12 22H21L17 28Z" fill="#fff" stroke="none" />
            </svg>
            <svg className="ml-4 h-7 w-[31px]" viewBox="0 0 31 28" fill="#fff" aria-hidden="true">
                <path d="M0 22H5V28H0ZM9 15H13V28H9ZM17 8H22V28H17ZM26 0H31V28H26Z" />
            </svg>
            <svg className="ml-[18px] h-[26px] w-[50px]" viewBox="0 0 50 26" aria-hidden="true">
                <rect width="47" height="26" rx="5" fill="#fff" />
                <path d="M47 9H48Q50 9 50 11V15Q50 18 48 18H47Z" fill="#8f9193" />
            </svg>
            <span className="ml-3">98%</span>
        </div>
    </div>
)

const Avatar = () => (
    <svg className="size-[99px] rounded-full" viewBox="38 47 298 298" role="img" aria-label="OTT HUB logo">
        <circle cx="187" cy="196" r="149" fill="#fdf8e8" />
        <path d="M95 250C120 262 145 272 168 290H95Z" fill="#d9432b" />
        <path d="M150 290C180 258 210 258 225 270L235 290Z" fill="#459a3c" />
        <path d="M208 290C215 265 255 275 273 235L280 290Z" fill="#f7bd45" />
        <path d="M112 128V117Q112 111 119 111H255Q263 111 263 117V128M150 126V112C150 88 166 76 187 76S225 88 225 112V126M106 210L94 282Q94 292 104 292H255M268 182L278 262" fill="none" stroke="#0c2b3a" strokeWidth="7" />
        <circle cx="131" cy="172" r="40" fill="#0c2b3a" />
        <path d="M118 152L153 173L118 193Z" fill="#fdf8e8" />
        <text x="165" y="207" fontSize="94" fontWeight="800" fontFamily="Inter" fill="#0c2b3a">TT</text>
        <text x="119" y="257" fontSize="55" fontWeight="700" fontFamily="Inter" fill="#0c2b3a">HUB</text>
        <circle cx="272" cy="283" r="23" fill="#fdf8e8" />
        <path d="M272 262L279 266L287 266L289 274L294 281L291 289L290 297L282 299L275 304L267 301L259 300L257 292L251 285L255 277L256 269L264 267Z" fill="#1380e6" />
        <path d="M263 283L270 289L282 277" fill="none" stroke="#fff" strokeWidth="4" />
    </svg>
)

const Header = () => (
    <header className="relative border-b border-[#1c2225] bg-[#0b1014]">
        <StatusBar />
        <div className="flex h-[151px] items-start pt-[26px] pr-[55px] pl-11">
            <button className="mt-[27px]" aria-label="Back">
                <svg className="h-11 w-[45px]" viewBox="0 0 45 44" fill="none" stroke="#f7f8fa" strokeWidth="5" aria-hidden="true">
                    <path d="M44 22H4M24 2L4 22L24 42" />
                </svg>
            </button>
            <div className="ml-[54px] flex items-center gap-8">
                <Avatar />
                <h1 className="text-[46px] leading-[60px] text-[#f7f8fa]">OTT HUB</h1>
            </div>
            <button className="mt-4 ml-auto flex items-center gap-6" aria-label="Call">
                <MdOutlineCall className="size-[67px] text-[#f7f8fa]" />
                <svg className="h-[14px] w-[23px]" viewBox="0 0 23 14" fill="#f7f8fa" aria-hidden="true">
                    <path d="M3 0H20Q25 1 21 6L14 13Q11.500 15 9 13L2 6Q-2 1 3 0Z" />
                </svg>
            </button>
            <button className="mt-[27px] ml-14" aria-label="More options">
                <svg className="h-11 w-3" viewBox="0 0 12 44" fill="#f7f8fa" aria-hidden="true">
                    <circle cx="6" cy="6" r="5.500" />
                    <circle cx="6" cy="22" r="5.500" />
                    <circle cx="6" cy="38" r="5.500" />
                </svg>
            </button>
        </div>
    </header>
)

// message composer
const Composer = () => (
    <form className="relative flex items-center gap-[13px] px-3 pt-[9px] pb-3">
        <div className="flex h-[129px] min-w-0 flex-1 items-center rounded-full bg-[#1f272a] pr-9 pl-[37px]">
            <button type="button" aria-label="Stickers">
                <svg className="size-14" viewBox="0 0 56 56" fill="none" stroke="#8d9598" strokeWidth="6" strokeLinejoin="round" aria-hidden="true">
                    <path d="M20 3H36C46 3 53 10 53 20V31C53 36 50 39 47 42L41 49C38 52 35 53 31 53H20C10 53 3 46 3 36V20C3 10 10 3 20 3Z" />
                    <path d="M53 31H42C34 31 30 35 30 42V53" strokeWidth="5" />
                    <path d="M15 32H37C32 34 30 37 29 42C21 42 16 38 15 32Z" fill="#8d9598" stroke="none" />
                    <circle cx="18" cy="19" r="4.500" fill="#8d9598" stroke="none" />
                    <circle cx="37" cy="19" r="4.500" fill="#8d9598" stroke="none" />
                </svg>
            </button>
            <div className="relative ml-[38px] flex min-w-0 flex-1 items-center">
                <span className="absolute left-0 h-[67px] w-[6px] bg-[#21c063]" />
                <input className="relative w-full bg-transparent text-[50px] leading-[67px] text-[#f7f8fa] outline-none placeholder:text-[#8d9598]"
                    id="message"
                    type="text"
                    aria-label="Message"
                    placeholder="Message"
                />
            </div>
            <div className="flex items-center text-[#8d9598]">
                <button type="button" aria-label="Attach">
                    <svg className="h-14 w-9" viewBox="0 0 36 56" fill="none" stroke="currentColor" strokeWidth="5" strokeLinecap="round" aria-hidden="true">
                        <path d="M33 14V38A15 15 0 0 1 3 38V13A10 10 0 0 1 23 13V38A5 5 0 0 1 13 38V15" />
                    </svg>
                </button>
                <button className="ml-[86px]" type="button" aria-label="Payment">
                    <svg className="size-14" viewBox="0 0 56 56" fill="none" stroke="currentColor" strokeWidth="5" aria-hidden="true">
                        <circle cx="28" cy="28" r="25" />
                        <path d="M20 18H37M20 25H37M20 18H25Q31 18 31 24T25 31H22L31 43" strokeWidth="4" />
                    </svg>
                </button>
                <button className="ml-[76px]" type="button" aria-label="Camera">
                    <svg className="size-14" viewBox="0 0 56 56" fill="none" stroke="currentColor" strokeWidth="5" strokeLinejoin="round" aria-hidden="true">
                        <path d="M3 11H16L21 6H35L40 11H53V51H3Z" />
                        <circle cx="28" cy="31" r="10" strokeWidth="6" />
                    </svg>
                </button>
            </div>
        </div>
        <button className="flex size-[132px] shrink-0 items-center justify-center rounded-full bg-[#21c063]" type="button" aria-label="Record voice message">
            <svg className="h-[54px] w-10" viewBox="0 0 40 54" fill="none" stroke="#0b1014" strokeWidth="5" strokeLinecap="round" aria-hidden="true">
                <rect x="12" y="0" width="17" height="34" rx="8" fill="#0b1014" stroke="none" />
                <path d="M4 28C4 50 37 50 37 28M20 45V51" />
            </svg>
        </button>
    </form>
)

// android navigation buttons
const NavigationBar = () => (
    <nav className="relative grid h-[116px] grid-cols-3 items-center justify-items-center bg-black px-[74px]">
        <button aria-label="Recent apps">
            <svg className="size-[46px]" viewBox="0 0 46 46" fill="none" stroke="#808080" strokeWidth="6" aria-hidden="true">
                <rect x="4" y="4" width="37" height="37" rx="3" />
            </svg>
        </button>
        <button aria-label="Home">
            <svg className="size-[46px]" viewBox="0 0 46 46" fill="none" stroke="#808080" strokeWidth="6" aria-hidden="true">
                <circle cx="23" cy="23" r="20" />
            </svg>
        </button>
        <button aria-label="Back">
            <svg className="size-[46px]" viewBox="0 0 46 46" fill="none" stroke="#808080" strokeWidth="6" strokeLinejoin="round" aria-hidden="true">
                <path d="M7 23L38 5V41Z" />
            </svg>
        </button>
    </nav>
)

export default function App() {
    return (
        <div className="relative flex h-screen w-full flex-col overflow-hidden bg-[#0b1014] font-[Inter,sans-serif]">
            <Wallpaper />
            <Header />
            <main className="relative min-h-0 flex-1">
                <ul className="flex h-full flex-col items-end overflow-hidden pr-[47px] pl-[47px] *:shrink-0">
                    {messages.map((message) => <Bubble key={message.id} message={message} />)}
                </ul>
                <button className="absolute right-[34px] bottom-11 flex size-[88px] items-center justify-center rounded-full bg-[#28323a] shadow-md" aria-label="Scroll to bottom">
                    <svg className="h-9 w-8" viewBox="0 0 32 36" fill="none" stroke="#9aa1a6" strokeWidth="5" strokeLinecap="round" strokeLinejoin="round" aria-hidden="true">
                        <path d="M3 3L16 16L29 3M3 19L16 32L29 19" />
                    </svg>
                </button>
            </main>
            <Composer />
            <NavigationBar />
        </div>
    )
}
